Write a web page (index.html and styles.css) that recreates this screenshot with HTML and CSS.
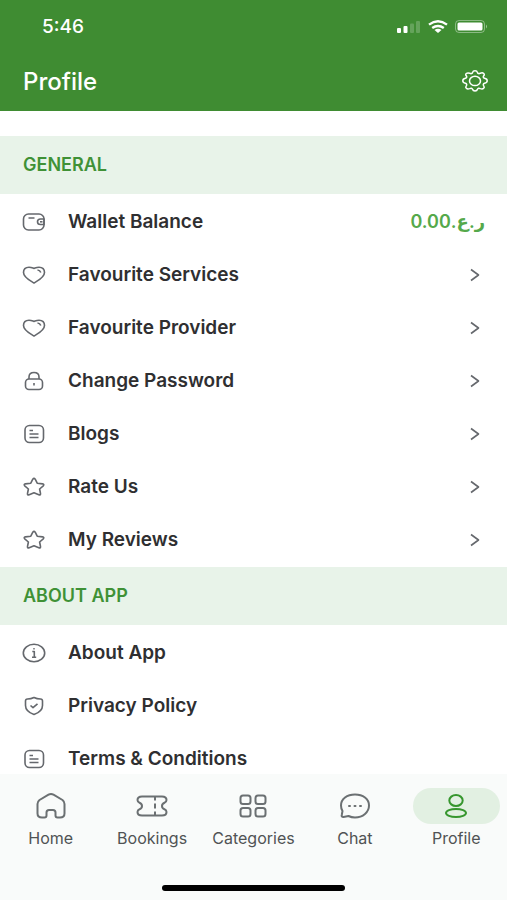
FILE: index.html
```html
<!DOCTYPE html>
<html lang="en">
<head>
<meta charset="utf-8">
<meta name="viewport" content="width=device-width, initial-scale=1">
<title>Profile</title>
<link rel="stylesheet" href="styles.css">
</head>
<body>
<svg class="sprite" aria-hidden="true">
  <symbol id="heart" viewBox="0 0 24 20"><path d="M12 18C8 15.500 1.500 12.500 1.500 7.500C1.500 4 3.800 2.200 7 2.200C9.500 2.200 10.500 2.900 12 3.400C13.500 2.900 14.500 2.200 17 2.200C20.200 2.200 22.500 4 22.500 7.500C22.500 12.500 16 15.500 12 18Z"/><path d="M15.500 5Q18 5.200 18.800 7.600"/></symbol>
  <symbol id="doc" viewBox="0 0 24 20"><rect x="3" y="1.500" width="18.500" height="17" rx="4.500"/><path d="M7.500 6.500H11M7.500 10H16.500M7.500 13.500H16.500"/></symbol>
  <symbol id="star" viewBox="0 0 24 20"><path d="M10.800 2.200Q12 .6 13.200 2.200L15.200 6.200L20.600 6.900Q22.600 7.300 21.300 8.800L17.600 12L18.500 16.500Q18.700 18.400 16.800 17.700L12 15.700L7.200 17.700Q5.300 18.400 5.500 16.500L6.400 12L2.700 8.800Q1.400 7.300 3.400 6.900L8.800 6.200Z"/></symbol>
  <symbol id="chevron" viewBox="0 0 12 14"><path d="M2 1.500L9.500 7L2 12.500"/></symbol>
</svg>
<header class="top">
  <div class="status">
    <span class="time">5:46</span>
    <div class="signals">
      <svg width="24" height="14" viewBox="0 0 24 14" fill="#fff"><rect x="0" y="8" width="4" height="5" rx="1"/><rect x="6.500" y="6" width="4" height="7" rx="1"/><rect x="13" y="3.500" width="4" height="9.500" rx="1" opacity=".2"/><rect x="19" y="1" width="4" height="12" rx="1" opacity=".2"/></svg>
      <svg width="20" height="14" viewBox="0 0 20 14" fill="none" stroke="#fff" stroke-width="2.400"><path d="M1 4.600Q10-2 19 4.600M4.200 8Q10 3.800 15.800 8"/><path d="M6.500 10Q10 7.500 13.500 10L10 13Z" fill="#fff" stroke="none"/></svg>
      <svg width="34" height="14" viewBox="0 0 34 14"><rect x=".5" y=".5" width="29" height="12" rx="3.500" fill="none" stroke="#fff" opacity=".4"/><rect x="2.500" y="2.500" width="25" height="8" rx="1.500" fill="#fff"/><path d="M31 4.500Q33 6.500 31 8.500Z" fill="#fff" opacity=".5"/></svg>
    </div>
  </div>
  <div class="titlebar">
    <h1>Profile</h1>
    <button class="settings" aria-label="Settings"><svg width="28" height="24" viewBox="0 0 28 24"><path d="M11.500 3.600Q12 1.800 14 1.800T16.500 3.600Q17.300 5.300 19.300 4.200Q21.500 3.300 22.700 4.500T22.600 6.900Q21.600 8.600 23.600 9.300Q26.200 9.800 26.200 11.800T23.600 14.300Q21.600 15 22.600 16.700Q23.900 18.200 22.700 19.300T19.300 19.600Q17.300 18.500 16.500 20.200Q16 21.900 14 21.900T11.500 20.200Q10.700 18.500 8.700 19.600Q6.500 20.500 5.300 19.300T5.400 16.700Q6.400 15 4.400 14.300Q1.800 13.800 1.800 11.800T4.400 9.300Q6.400 8.600 5.400 6.900Q4.100 5.500 5.300 4.500T8.700 4.200Q10.700 5.300 11.500 3.600Z"/><ellipse cx="14" cy="11.900" rx="5.500" ry="4.700"/></svg></button>
  </div>
</header>
<main>
  <section>
    <h2>GENERAL</h2>
    <ul>
      <li><a href="#wallet"><svg class="icon" viewBox="0 0 24 20"><rect x="1.500" y="2" width="20.500" height="16" rx="5"/><path d="M6.500 6H12.500M22 7H18.500Q15.500 7 15.500 9.700T18.500 12.500H22Z"/><path d="M18 9.800H20.500"/></svg><span class="label">Wallet Balance</span><span class="amount" dir="rtl" lang="ar">ر.ع.0.00</span></a></li>
      <li><a href="#services"><svg class="icon"><use href="#heart"/></svg><span class="label">Favourite Services</span><svg class="go"><use href="#chevron"/></svg></a></li>
      <li><a href="#provider"><svg class="icon"><use href="#heart"/></svg><span class="label">Favourite Provider</span><svg class="go"><use href="#chevron"/></svg></a></li>
      <li><a href="#password"><svg class="icon" viewBox="0 0 24 20"><rect x="3.500" y="8" width="17" height="10.500" rx="3.500"/><path d="M7 8V6Q7 1.500 12 1.500T17 6V8M12 12V14.500"/></svg><span class="label">Change Password</span><svg class="go"><use href="#chevron"/></svg></a></li>
      <li><a href="#blogs"><svg class="icon"><use href="#doc"/></svg><span class="label">Blogs</span><svg class="go"><use href="#chevron"/></svg></a></li>
      <li><a href="#rate"><svg class="icon"><use href="#star"/></svg><span class="label">Rate Us</span><svg class="go"><use href="#chevron"/></svg></a></li>
      <li><a href="#reviews"><svg class="icon"><use href="#star"/></svg><span class="label">My Reviews</span><svg class="go"><use href="#chevron"/></svg></a></li>
    </ul>
  </section>
  <section>
    <h2>ABOUT APP</h2>
    <ul>
      <li><a href="#about"><svg class="icon" viewBox="0 0 24 20"><ellipse cx="12" cy="10" rx="10.700" ry="8.800"/><path d="M10.300 8.500H12.300V14M10 14.200H14.200M11.300 5.700H12.700"/></svg><span class="label">About App</span></a></li>
      <li><a href="#privacy"><svg class="icon" viewBox="0 0 24 20"><path d="M12 1.500Q15 3 18.500 3Q20.500 3.200 20.500 5V9.500Q20.500 15.500 12 18.500Q3.500 15.500 3.500 9.500V5Q3.500 3.200 5.500 3Q9 3 12 1.500Z"/><path d="M8.500 9.500L11 11.700L15.500 7.800"/></svg><span class="label">Privacy Policy</span></a></li>
      <li><a href="#terms"><svg class="icon"><use href="#doc"/></svg><span class="label">Terms &amp; Conditions</span></a></li>
    </ul>
  </section>
</main>
<footer>
  <nav>
    <a href="#home"><span class="pill"><svg viewBox="0 0 32 28"><path d="M2.500 12Q2.500 9.500 4.500 8L13.500 2.700Q16 1.300 18.500 2.700L27.500 8Q29.500 9.500 29.500 12V21.500Q29.500 25.500 25 25.500H22.500Q20.500 25.500 20.500 23.500V20.500Q20.500 18 18 18H14Q11.500 18 11.500 20.500V23.500Q11.500 25.500 9.500 25.500H7Q2.500 25.500 2.500 21.500Z"/></svg></span>Home</a>
    <a href="#bookings"><span class="pill"><svg viewBox="0 0 32 28"><path d="M6 4.500H26Q30.500 4.500 30.500 8Q30.500 10 28.500 10.700Q26 11.700 26 14T28.500 17.300Q30.500 18 30.500 20Q30.500 23.500 26 23.500H6Q1.500 23.500 1.500 20Q1.500 18 3.500 17.300Q6 16.300 6 14T3.500 10.700Q1.500 10 1.500 8Q1.500 4.500 6 4.500Z"/><path d="M19 5V8.500M19 11.500V16.500M19 19.500V23"/></svg></span>Bookings</a>
    <a href="#categories"><span class="pill"><svg viewBox="0 0 32 28"><rect x="3.500" y="3.500" width="10" height="8.500" rx="2.500"/><rect x="18.500" y="3.500" width="10" height="8.500" rx="2.500"/><rect x="3.500" y="16" width="10" height="8.500" rx="2.500"/><rect x="18.500" y="16" width="10" height="8.500" rx="2.500"/></svg></span>Categories</a>
    <a href="#chat"><span class="pill"><svg viewBox="0 0 32 28"><path d="M3.500 19Q2 16.500 2 13.500C2 7 8 2.500 16 2.500S30 7 30 13.500S24 25.500 16 25.500Q12.500 25.500 9.500 24L4.500 25Q2 25 2.800 22.800Z"/><path d="M10 14H11M15.500 14H16.500M21 14H22" stroke-linecap="round"/></svg></span>Chat</a>
    <a href="#profile" class="active" aria-current="page"><span class="pill"><svg viewBox="0 0 32 28"><ellipse cx="16" cy="8.500" rx="6.700" ry="5.500"/><ellipse cx="16" cy="21" rx="10" ry="4"/></svg></span>Profile</a>
  </nav>
  <div class="home-bar"></div>
</footer>
</body>
</html>
```
FILE: styles.css
```css
* { box-sizing: border-box; }
body {
  margin: 0;
  height: 100vh;
  display: flex;
  flex-direction: column;
  overflow: hidden;
  background: #fff;
  color: #2f2f31;
  font-family: Inter, "DejaVu Sans", sans-serif;
}
.sprite { display: none; }
svg { flex: none; }
h1, h2, ul { margin: 0; padding: 0; }
ul { list-style: none; padding: 1px 0; }
a { color: inherit; text-decoration: none; }

.top { background: #3f8c32; color: #fff; }
.status {
  display: flex;
  justify-content: space-between;
  align-items: center;
  height: 53px;
  padding: 0 18px 0 42px;
}
.time { font-size: 19px; font-weight: 500; }
.signals { display: flex; gap: 7px; }
.titlebar {
  display: flex;
  justify-content: space-between;
  align-items: center;
  height: 58px;
  padding: 0 18px 2px 23px;
}
h1 { font-size: 24px; font-weight: 500; }
.settings {
  display: flex;
  padding: 0;
  border: 0;
  background: none;
  fill: none;
  stroke: #fff;
  stroke-width: 1.5;
}

main {
  flex: 1;
  min-height: 0;
  overflow-y: auto;
  scrollbar-width: none;
  padding-top: 25px;
}
h2 {
  padding: 0 23px;
  background: #e8f3e9;
  color: #3f9136;
  font-size: 18px;
  font-weight: 600;
  line-height: 58px;
}
li a {
  display: flex;
  align-items: center;
  gap: 22px;
  height: 53px;
  padding: 0 22px;
}
.label { flex: 1; font-size: 19px; font-weight: 600; }
.icon, .go { fill: none; stroke: #65686d; stroke-width: 1.6; stroke-linejoin: round; }
.icon { width: 24px; height: 20px; }
.go { width: 12px; height: 14px; margin-right: 4px; }
.amount { color: #55a94b; font-size: 18px; font-weight: 600; }

footer { background: #f9fbfa; padding: 14px 0 9px; }
nav { display: grid; grid-template-columns: repeat(5, 1fr); }
nav a {
  display: flex;
  flex-direction: column;
  align-items: center;
  gap: 4px;
  color: #505354;
  font-size: 16px;
  line-height: 20px;
}
.pill {
  display: flex;
  justify-content: center;
  align-items: center;
  width: 86%;
  height: 36px;
  border-radius: 18px;
}
.pill svg {
  width: 32px;
  height: 28px;
  fill: none;
  stroke: #6b7072;
  stroke-width: 2;
  stroke-linejoin: round;
}
.active .pill { background: #e2f0e2; }
.active .pill svg { stroke: #36962e; }
.home-bar {
  width: 36%;
  height: 6px;
  margin: 37px auto 0;
  border-radius: 3px;
  background: #000;
}
```
